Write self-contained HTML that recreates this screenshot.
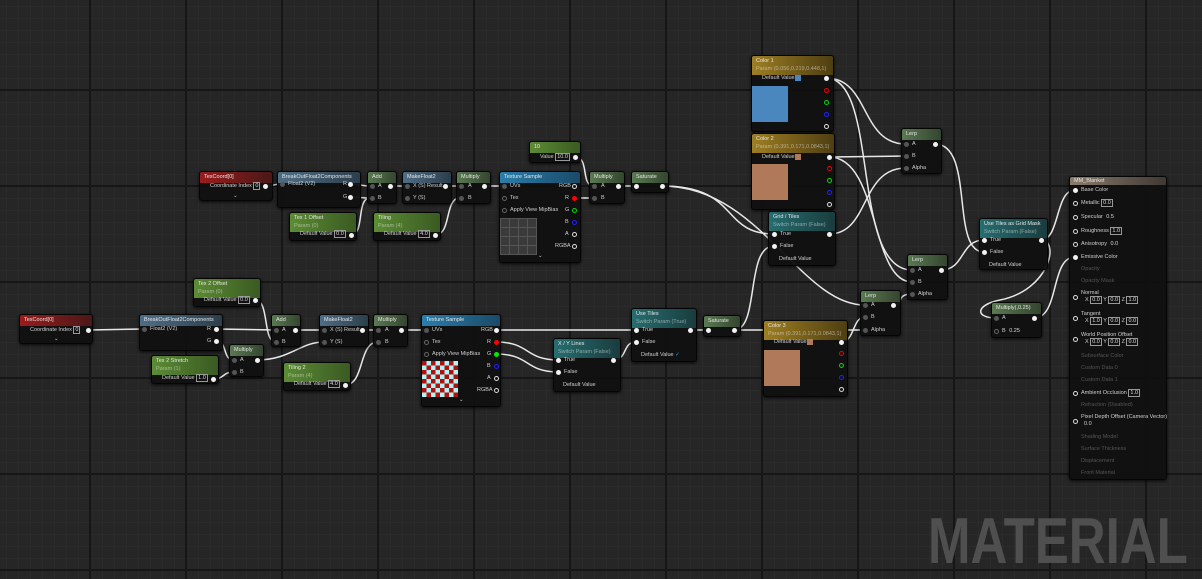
<!DOCTYPE html><html><head><meta charset="utf-8"><style>
*{margin:0;padding:0;box-sizing:border-box}
body{width:1202px;height:579px;overflow:hidden;position:relative;background-color:#262626;
background-image:linear-gradient(#161616 2px,transparent 2px),linear-gradient(90deg,#161616 2px,transparent 2px),linear-gradient(#2b2b2b 1px,transparent 1px),linear-gradient(90deg,#2b2b2b 1px,transparent 1px);
background-size:96px 96px,96px 96px,12px 12px,12px 12px;background-position:89px 89px,89px 89px,6px 6px,6px 6px;
font-family:"Liberation Sans",sans-serif}
.n{position:absolute;background:rgba(16,17,16,.96);border:1px solid #050505;border-radius:3px;box-shadow:0 1px 3px rgba(0,0,0,.8)}
.h{height:11px;line-height:10px;padding-left:4px;font-size:5.5px;color:#e6e6e6;border-radius:2px 2px 0 0;white-space:nowrap;overflow:hidden}
.h2{height:19px;line-height:8px;padding-top:1px}
.h2 s{text-decoration:none;display:block;opacity:.55}
.r{background:linear-gradient(90deg,#9a1c1c,#4a1818)}
.b{background:linear-gradient(90deg,#4e6e86,#2c3e4c)}
.g{background:linear-gradient(90deg,#5c8c34,#3a5a22)}
.m{background:linear-gradient(90deg,#5a7a52,#34452f)}
.t{background:linear-gradient(90deg,#266e70,#1a3c3e)}
.y{background:linear-gradient(90deg,#9e7e22,#4e3e12)}
.x{background:linear-gradient(90deg,#2a7eac,#1a4a68)}
.k{background:linear-gradient(90deg,#8a7c6e,#403833)}
i{position:absolute;font-style:normal;font-size:5.5px;color:#d0d0d0;white-space:nowrap;line-height:7px}
i.d{color:#555}
.p{position:absolute;width:5px;height:5px;border-radius:50%;background:#f2f2f2}
.o{position:absolute;width:5px;height:5px;border-radius:50%;border:1px solid #ddd}
.q{position:absolute;width:5px;height:5px;border-radius:50%;background:#555}
.v{border:1px solid #999;padding:0 1px;color:#ddd}
.sw{position:absolute}
.wm{position:absolute;left:928px;top:503px;font:bold 65px "Liberation Sans",sans-serif;color:#4f4f4f;transform:scaleX(.785);transform-origin:0 0}
svg{position:absolute;left:0;top:0}
</style></head><body>
<div class="wm">MATERIAL</div>
<svg width="1202" height="579" fill="none" stroke="#e8e8e8" stroke-width="1.5">
<path d="M265 186C272 186 275 184 282 184"/>
<path d="M350 184C360 184 360 186 370 186"/>
<path d="M350 197C360 197 360 198 370 198"/>
<path d="M390 186L407 186"/>
<path d="M351 235C365 235 356 198 370 198"/>
<path d="M445 186L460 186"/>
<path d="M435 235C452 235 444 198 460 198"/>
<path d="M484 186L504 186"/>
<path d="M574 198L594 198"/>
<path d="M575 157C590 157 580 186 594 186"/>
<path d="M618 186L636 186"/>
<path d="M662 186C740 186 720 234 774 234"/>
<path d="M662 186C760 186 800 305 865 305"/>
<path d="M829 234C870 234 860 168 906 168"/>
<path d="M826 78C870 78 860 144 906 144"/>
<path d="M826 78C880 78 850 270 912 270"/>
<path d="M829 157L906 156"/>
<path d="M829 157C880 157 870 282 912 282"/>
<path d="M935 144C975 144 950 252 984 252"/>
<path d="M941 270C965 270 960 240 984 240"/>
<path d="M1041 240C1060 240 1055 190 1075 190"/>
<path d="M1041 240C1060 240 1050 290 1000 300C975 305 975 318 996 318"/>
<path d="M1034 318C1060 318 1050 257 1075 257"/>
<path d="M893 305C905 305 895 294 912 294"/>
<path d="M88 330L143 329"/>
<path d="M216 329L276 330"/>
<path d="M216 341C228 341 222 360 234 360"/>
<path d="M213 379C225 379 222 372 234 372"/>
<path d="M255 300C270 300 262 342 276 342"/>
<path d="M257 360C290 360 300 342 324 342"/>
<path d="M295 330L324 330"/>
<path d="M362 330L378 330"/>
<path d="M345 385C365 385 358 342 378 342"/>
<path d="M401 330L426 330"/>
<path d="M496 330L636 330"/>
<path d="M496 342C530 342 525 360 558 360"/>
<path d="M496 354C530 354 525 372 558 372"/>
<path d="M613 360C628 360 622 342 636 342"/>
<path d="M690 330L708 330"/>
<path d="M734 330C760 330 745 246 774 246"/>
<path d="M734 330L865 330"/>
<path d="M841 342C855 342 852 317 865 317"/>
</svg>

<div class="n" style="left:199px;top:171px;width:74px;height:30px"><div class="h r">TexCoord[0]</div></div>
<i style="left:210px;top:183px">Coordinate Index <span class="v">0</span></i><div class="p" style="left:263px;top:184px"></div>
<i style="left:233px;top:193px">⌄</i>

<div class="n" style="left:277px;top:171px;width:84px;height:37px"><div class="h b">BreakOutFloat2Components</div></div>
<div class="q" style="left:280px;top:182px"></div><i style="left:288px;top:181px">Float2 (V2)</i>
<i style="left:343px;top:181px">R</i><div class="p" style="left:348px;top:182px"></div>
<i style="left:343px;top:194px">G</i><div class="p" style="left:348px;top:195px"></div>

<div class="n" style="left:367px;top:171px;width:30px;height:33px"><div class="h m">Add</div></div>
<div class="q" style="left:370px;top:184px"></div><i style="left:378px;top:183px">A</i><div class="p" style="left:388px;top:184px"></div>
<div class="q" style="left:370px;top:196px"></div><i style="left:378px;top:195px">B</i>

<div class="n" style="left:402px;top:171px;width:50px;height:33px"><div class="h b">MakeFloat2</div></div>
<div class="q" style="left:405px;top:184px"></div><i style="left:413px;top:183px">X (S)  Result</i><div class="p" style="left:443px;top:184px"></div>
<div class="q" style="left:405px;top:196px"></div><i style="left:413px;top:195px">Y (S)</i>

<div class="n" style="left:456px;top:171px;width:35px;height:33px"><div class="h m">Multiply</div></div>
<div class="q" style="left:459px;top:184px"></div><i style="left:468px;top:183px">A</i><div class="p" style="left:482px;top:184px"></div>
<div class="q" style="left:459px;top:196px"></div><i style="left:468px;top:195px">B</i>

<div class="n" style="left:289px;top:212px;width:68px;height:29px"><div class="h h2 g">Tex 1 Offset<s>Param (0)</s></div></div>
<i style="left:300px;top:231px">Default Value <span class="v">0.0</span></i><div class="p" style="left:349px;top:233px"></div>
<div class="n" style="left:373px;top:212px;width:68px;height:29px"><div class="h h2 g">Tiling<s>Param (4)</s></div></div>
<i style="left:384px;top:231px">Default Value <span class="v">4.0</span></i><div class="p" style="left:433px;top:233px"></div>

<div class="n" style="left:499px;top:171px;width:82px;height:92px"><div class="h x">Texture Sample</div></div>
<div class="q" style="left:502px;top:184px"></div><i style="left:510px;top:183px">UVs</i>
<div class="o" style="left:502px;top:196px;border-color:#666"></div><i style="left:510px;top:195px">Tex</i>
<div class="o" style="left:502px;top:208px;border-color:#666"></div><i style="left:510px;top:207px">Apply View MipBias</i>
<svg style="left:500px;top:218px" width="37" height="37"><rect width="37" height="37" fill="#555"/><g fill="#3a3a3a" stroke="none"><rect x="1" y="1" width="8" height="8"/><rect x="10" y="1" width="8" height="8"/><rect x="19" y="1" width="8" height="8"/><rect x="28" y="1" width="8" height="8"/><rect x="1" y="10" width="8" height="8"/><rect x="10" y="10" width="8" height="8"/><rect x="19" y="10" width="8" height="8"/><rect x="28" y="10" width="8" height="8"/><rect x="1" y="19" width="8" height="8"/><rect x="10" y="19" width="8" height="8"/><rect x="19" y="19" width="8" height="8"/><rect x="28" y="19" width="8" height="8"/><rect x="1" y="28" width="8" height="8"/><rect x="10" y="28" width="8" height="8"/><rect x="19" y="28" width="8" height="8"/><rect x="28" y="28" width="8" height="8"/></g></svg>
<i style="left:559px;top:183px">RGB</i><div class="o" style="left:572px;top:184px"></div>
<i style="left:565px;top:195px">R</i><div class="p" style="left:572px;top:196px;background:#f00"></div>
<i style="left:565px;top:207px">G</i><div class="o" style="left:572px;top:208px;border-color:#0d0"></div>
<i style="left:565px;top:219px">B</i><div class="o" style="left:572px;top:220px;border-color:#22f"></div>
<i style="left:565px;top:231px">A</i><div class="o" style="left:572px;top:232px"></div>
<i style="left:555px;top:243px">RGBA</i><div class="o" style="left:572px;top:244px"></div>
<i style="left:538px;top:253px">⌄</i>

<div class="n" style="left:529px;top:141px;width:52px;height:22px"><div class="h g">10</div></div>
<i style="left:540px;top:154px">Value <span class="v">10.0</span></i><div class="p" style="left:573px;top:155px"></div>

<div class="n" style="left:589px;top:171px;width:36px;height:33px"><div class="h m">Multiply</div></div>
<div class="q" style="left:592px;top:184px"></div><i style="left:601px;top:183px">A</i><div class="p" style="left:616px;top:184px"></div>
<div class="q" style="left:592px;top:196px"></div><i style="left:601px;top:195px">B</i>
<div class="n" style="left:631px;top:171px;width:38px;height:22px"><div class="h m">Saturate</div></div>
<div class="p" style="left:634px;top:184px"></div><div class="p" style="left:660px;top:184px"></div>

<div class="n" style="left:751px;top:55px;width:83px;height:77px"><div class="h h2 y">Color 1<s>Param (0.056,0.219,0.448,1)</s></div></div>
<i style="left:762px;top:75px">Default Value</i><div class="sw" style="left:795px;top:75px;width:6px;height:6px;background:#4a87bf"></div><div class="p" style="left:824px;top:76px"></div>
<div class="sw" style="left:752px;top:86px;width:36px;height:36px;background:#4a87bf"></div>
<div class="o" style="left:824px;top:88px;border-color:#e00"></div><div class="o" style="left:824px;top:100px;border-color:#0d0"></div><div class="o" style="left:824px;top:112px;border-color:#22f"></div><div class="o" style="left:824px;top:124px"></div>

<div class="n" style="left:751px;top:133px;width:84px;height:77px"><div class="h h2 y">Color 2<s>Param (0.391,0.171,0.0843,1)</s></div></div>
<i style="left:762px;top:154px">Default Value</i><div class="sw" style="left:795px;top:154px;width:6px;height:6px;background:#b07a5a"></div><div class="p" style="left:827px;top:155px"></div>
<div class="sw" style="left:752px;top:164px;width:36px;height:36px;background:#b07a5a"></div>
<div class="o" style="left:827px;top:166px;border-color:#e00"></div><div class="o" style="left:827px;top:178px;border-color:#0d0"></div><div class="o" style="left:827px;top:190px;border-color:#22f"></div><div class="o" style="left:827px;top:202px"></div>

<div class="n" style="left:768px;top:211px;width:68px;height:55px"><div class="h h2 t">Grid / Tiles<s>Switch Param (False)</s></div></div>
<div class="p" style="left:772px;top:232px"></div><i style="left:780px;top:231px">True</i><div class="p" style="left:827px;top:232px"></div>
<div class="p" style="left:772px;top:244px"></div><i style="left:780px;top:243px">False</i>
<i style="left:779px;top:256px">Default Value</i>

<div class="n" style="left:901px;top:128px;width:41px;height:46px"><div class="h m">Lerp</div></div>
<div class="q" style="left:904px;top:142px"></div><i style="left:912px;top:141px">A</i><div class="p" style="left:933px;top:142px"></div>
<div class="q" style="left:904px;top:154px"></div><i style="left:912px;top:153px">B</i>
<div class="q" style="left:904px;top:166px"></div><i style="left:912px;top:165px">Alpha</i>

<div class="n" style="left:907px;top:254px;width:41px;height:46px"><div class="h m">Lerp</div></div>
<div class="q" style="left:910px;top:268px"></div><i style="left:918px;top:267px">A</i><div class="p" style="left:939px;top:268px"></div>
<div class="q" style="left:910px;top:280px"></div><i style="left:918px;top:279px">B</i>
<div class="q" style="left:910px;top:292px"></div><i style="left:918px;top:291px">Alpha</i>

<div class="n" style="left:860px;top:290px;width:41px;height:46px"><div class="h m">Lerp</div></div>
<div class="q" style="left:863px;top:303px"></div><i style="left:871px;top:302px">A</i><div class="p" style="left:891px;top:303px"></div>
<div class="q" style="left:863px;top:315px"></div><i style="left:871px;top:314px">B</i>
<div class="q" style="left:863px;top:328px"></div><i style="left:871px;top:327px">Alpha</i>

<div class="n" style="left:979px;top:218px;width:69px;height:52px"><div class="h h2 t">Use Tiles as Grid Mask<s>Switch Param (False)</s></div></div>
<div class="p" style="left:982px;top:238px"></div><i style="left:990px;top:237px">True</i><div class="p" style="left:1039px;top:238px"></div>
<div class="p" style="left:982px;top:250px"></div><i style="left:990px;top:249px">False</i>
<i style="left:989px;top:262px">Default Value</i>

<div class="n" style="left:991px;top:302px;width:51px;height:36px"><div class="h m">Multiply(,0.25)</div></div>
<div class="q" style="left:994px;top:316px"></div><i style="left:1002px;top:315px">A</i><div class="p" style="left:1032px;top:316px"></div>
<div class="o" style="left:994px;top:329px;border-color:#666"></div><i style="left:1002px;top:328px">B <span class="v" style="border-color:transparent">0.25</span></i>

<div class="n" style="left:1069px;top:176px;width:98px;height:304px"><div class="h k" style="height:8px;line-height:8px">MM_Blanket</div></div>
<div class="p" style="left:1073px;top:188px"></div><i style="left:1081px;top:187px">Base Color</i>
<div class="o" style="left:1073px;top:201px"></div><i style="left:1081px;top:200px">Metallic <span class="v">0.0</span></i>
<div class="o" style="left:1073px;top:215px"></div><i style="left:1081px;top:214px">Specular <span class="v" style="border-color:transparent">0.5</span></i>
<div class="o" style="left:1073px;top:229px"></div><i style="left:1081px;top:228px">Roughness <span class="v">1.0</span></i>
<div class="o" style="left:1073px;top:242px"></div><i style="left:1081px;top:241px">Anisotropy <span class="v" style="border-color:transparent">0.0</span></i>
<div class="p" style="left:1073px;top:255px"></div><i style="left:1081px;top:254px">Emissive Color</i>
<i class="d" style="left:1081px;top:266px">Opacity</i><i class="d" style="left:1081px;top:278px">Opacity Mask</i>
<div class="o" style="left:1073px;top:295px"></div><i style="left:1081px;top:290px">Normal</i><i style="left:1085px;top:297px">X <span class="v">0.0</span> Y <span class="v">0.0</span> Z <span class="v">1.0</span></i>
<div class="o" style="left:1073px;top:316px"></div><i style="left:1081px;top:311px">Tangent</i><i style="left:1085px;top:318px">X <span class="v">1.0</span> Y <span class="v">0.0</span> Z <span class="v">0.0</span></i>
<div class="o" style="left:1073px;top:337px"></div><i style="left:1081px;top:332px">World Position Offset</i><i style="left:1085px;top:339px">X <span class="v">0.0</span> Y <span class="v">0.0</span> Z <span class="v">0.0</span></i>
<i class="d" style="left:1081px;top:353px">Subsurface Color</i><i class="d" style="left:1081px;top:365px">Custom Data 0</i><i class="d" style="left:1081px;top:377px">Custom Data 1</i>
<div class="o" style="left:1073px;top:391px"></div><i style="left:1081px;top:390px">Ambient Occlusion <span class="v">1.0</span></i>
<i class="d" style="left:1081px;top:402px">Refraction (Disabled)</i>
<div class="o" style="left:1073px;top:419px"></div><i style="left:1081px;top:414px">Pixel Depth Offset (Camera Vector)</i><i style="left:1084px;top:421px">0.0</i>
<i class="d" style="left:1081px;top:434px">Shading Model</i><i class="d" style="left:1081px;top:446px">Surface Thickness</i><i class="d" style="left:1081px;top:458px">Displacement</i><i class="d" style="left:1081px;top:470px">Front Material</i>

<div class="n" style="left:763px;top:320px;width:85px;height:77px"><div class="h h2 y">Color 3<s>Param (0.391,0.171,0.0843,1)</s></div></div>
<i style="left:774px;top:339px">Default Value</i><div class="sw" style="left:807px;top:339px;width:6px;height:6px;background:#b07a5a"></div><div class="p" style="left:839px;top:340px"></div>
<div class="sw" style="left:764px;top:350px;width:36px;height:36px;background:#b07a5a"></div>
<div class="o" style="left:839px;top:351px;border-color:#e00"></div><div class="o" style="left:839px;top:363px;border-color:#0d0"></div><div class="o" style="left:839px;top:375px;border-color:#22f"></div><div class="o" style="left:839px;top:387px"></div>

<div class="n" style="left:19px;top:314px;width:74px;height:30px"><div class="h r">TexCoord[0]</div></div>
<i style="left:30px;top:327px">Coordinate Index <span class="v">0</span></i><div class="p" style="left:86px;top:328px"></div>
<i style="left:54px;top:336px">⌄</i>

<div class="n" style="left:139px;top:314px;width:84px;height:37px"><div class="h b">BreakOutFloat2Components</div></div>
<div class="q" style="left:142px;top:327px"></div><i style="left:150px;top:326px">Float2 (V2)</i>
<i style="left:207px;top:326px">R</i><div class="p" style="left:214px;top:327px"></div>
<i style="left:207px;top:338px">G</i><div class="p" style="left:214px;top:339px"></div>

<div class="n" style="left:193px;top:278px;width:68px;height:29px"><div class="h h2 g">Tex 2 Offset<s>Param (0)</s></div></div>
<i style="left:204px;top:297px">Default Value <span class="v">0.0</span></i><div class="p" style="left:253px;top:298px"></div>

<div class="n" style="left:271px;top:314px;width:30px;height:33px"><div class="h m">Add</div></div>
<div class="q" style="left:274px;top:328px"></div><i style="left:282px;top:327px">A</i><div class="p" style="left:293px;top:328px"></div>
<div class="q" style="left:274px;top:340px"></div><i style="left:282px;top:339px">B</i>

<div class="n" style="left:319px;top:314px;width:50px;height:33px"><div class="h b">MakeFloat2</div></div>
<div class="q" style="left:322px;top:328px"></div><i style="left:330px;top:327px">X (S)  Result</i><div class="p" style="left:360px;top:328px"></div>
<div class="q" style="left:322px;top:340px"></div><i style="left:330px;top:339px">Y (S)</i>

<div class="n" style="left:373px;top:314px;width:35px;height:33px"><div class="h m">Multiply</div></div>
<div class="q" style="left:376px;top:328px"></div><i style="left:385px;top:327px">A</i><div class="p" style="left:399px;top:328px"></div>
<div class="q" style="left:376px;top:340px"></div><i style="left:385px;top:339px">B</i>

<div class="n" style="left:229px;top:344px;width:35px;height:33px"><div class="h m">Multiply</div></div>
<div class="q" style="left:232px;top:358px"></div><i style="left:240px;top:357px">A</i><div class="p" style="left:255px;top:358px"></div>
<div class="q" style="left:232px;top:370px"></div><i style="left:240px;top:369px">B</i>

<div class="n" style="left:151px;top:355px;width:68px;height:29px"><div class="h h2 g">Tex 2 Stretch<s>Param (1)</s></div></div>
<i style="left:162px;top:375px">Default Value <span class="v">1.0</span></i><div class="p" style="left:211px;top:377px"></div>
<div class="n" style="left:283px;top:362px;width:68px;height:29px"><div class="h h2 g">Tiling 2<s>Param (4)</s></div></div>
<i style="left:294px;top:381px">Default Value <span class="v">4.0</span></i><div class="p" style="left:343px;top:383px"></div>

<div class="n" style="left:421px;top:314px;width:80px;height:93px"><div class="h x">Texture Sample</div></div>
<div class="q" style="left:424px;top:328px"></div><i style="left:432px;top:327px">UVs</i>
<div class="o" style="left:424px;top:340px;border-color:#666"></div><i style="left:432px;top:339px">Tex</i>
<div class="o" style="left:424px;top:352px;border-color:#666"></div><i style="left:432px;top:351px">Apply View MipBias</i>
<svg style="left:422px;top:361px" width="36" height="36"><defs><pattern id="c" width="9" height="9" patternUnits="userSpaceOnUse"><rect width="9" height="9" fill="#aef4f4"/><rect width="4.5" height="4.5" fill="#b01010"/><rect x="4.5" y="4.5" width="4.5" height="4.5" fill="#b01010"/></pattern></defs><rect width="36" height="36" fill="url(#c)" stroke="none"/></svg>
<i style="left:481px;top:327px">RGB</i><div class="p" style="left:494px;top:328px"></div>
<i style="left:487px;top:339px">R</i><div class="p" style="left:494px;top:340px;background:#f00"></div>
<i style="left:487px;top:351px">G</i><div class="p" style="left:494px;top:352px;background:#0e0"></div>
<i style="left:487px;top:363px">B</i><div class="o" style="left:494px;top:364px;border-color:#22f"></div>
<i style="left:487px;top:375px">A</i><div class="o" style="left:494px;top:376px"></div>
<i style="left:477px;top:387px">RGBA</i><div class="o" style="left:494px;top:388px"></div>
<i style="left:459px;top:397px">⌄</i>

<div class="n" style="left:553px;top:338px;width:68px;height:54px"><div class="h h2 t">X / Y Lines<s>Switch Param (False)</s></div></div>
<div class="p" style="left:556px;top:358px"></div><i style="left:564px;top:357px">True</i><div class="p" style="left:611px;top:358px"></div>
<div class="p" style="left:556px;top:370px"></div><i style="left:564px;top:369px">False</i>
<i style="left:563px;top:382px">Default Value</i>

<div class="n" style="left:631px;top:308px;width:66px;height:54px"><div class="h h2 t">Use Tiles<s>Switch Param (True)</s></div></div>
<div class="p" style="left:634px;top:328px"></div><i style="left:642px;top:327px">True</i><div class="p" style="left:688px;top:328px"></div>
<div class="p" style="left:634px;top:340px"></div><i style="left:642px;top:339px">False</i>
<i style="left:641px;top:352px">Default Value <span style="color:#39f">✓</span></i>

<div class="n" style="left:703px;top:315px;width:38px;height:22px"><div class="h m">Saturate</div></div>
<div class="p" style="left:706px;top:328px"></div><div class="p" style="left:732px;top:328px"></div>
</body></html>
